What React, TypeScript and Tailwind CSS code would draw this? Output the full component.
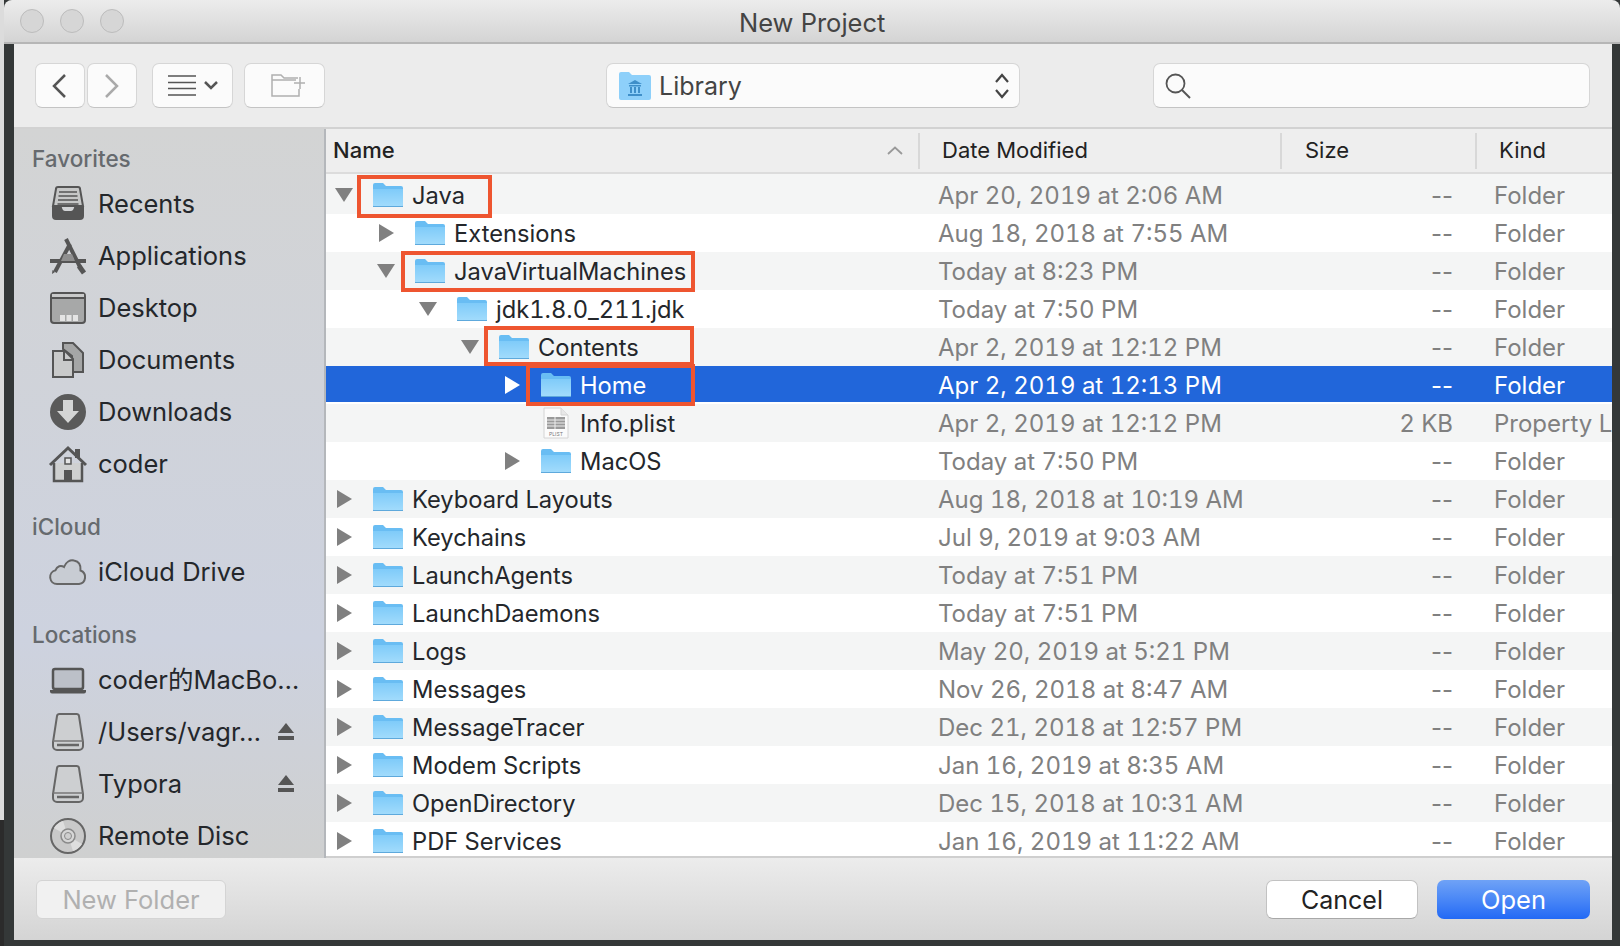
import type { ReactNode } from "react";

const font = "font-[Inter,'Noto_Sans_CJK_SC',sans-serif]";

type Row = {
  name: string;
  depth: number;
  open?: boolean;
  leaf?: boolean;
  date: string;
  size?: string;
  kind?: string;
  box?: [number, number, number, number];
};

const rows: Row[] = [
  { name: "Java", depth: 0, open: true, date: "Apr 20, 2019 at 2:06 AM", box: [31, -1, 135, 43] },
  { name: "Extensions", depth: 1, date: "Aug 18, 2018 at 7:55 AM" },
  { name: "JavaVirtualMachines", depth: 1, open: true, date: "Today at 8:23 PM", box: [75, -1, 294, 41] },
  { name: "jdk1.8.0_211.jdk", depth: 2, open: true, date: "Today at 7:50 PM" },
  { name: "Contents", depth: 3, open: true, date: "Apr 2, 2019 at 12:12 PM", box: [158, -2, 210, 40] },
  { name: "Home", depth: 4, date: "Apr 2, 2019 at 12:13 PM", box: [200, -2, 169, 42] },
  { name: "Info.plist", depth: 4, leaf: true, date: "Apr 2, 2019 at 12:12 PM", size: "2 KB", kind: "Property List" },
  { name: "MacOS", depth: 4, date: "Today at 7:50 PM" },
  { name: "Keyboard Layouts", depth: 0, date: "Aug 18, 2018 at 10:19 AM" },
  { name: "Keychains", depth: 0, date: "Jul 9, 2019 at 9:03 AM" },
  { name: "LaunchAgents", depth: 0, date: "Today at 7:51 PM" },
  { name: "LaunchDaemons", depth: 0, date: "Today at 7:51 PM" },
  { name: "Logs", depth: 0, date: "May 20, 2019 at 5:21 PM" },
  { name: "Messages", depth: 0, date: "Nov 26, 2018 at 8:47 AM" },
  { name: "MessageTracer", depth: 0, date: "Dec 21, 2018 at 12:57 PM" },
  { name: "Modem Scripts", depth: 0, date: "Jan 16, 2019 at 8:35 AM" },
  { name: "OpenDirectory", depth: 0, date: "Dec 15, 2018 at 10:31 AM" },
  { name: "PDF Services", depth: 0, date: "Jan 16, 2019 at 11:22 AM" },
];

function Folder() {
  return (
    <svg width="30" height="26" viewBox="0 0 30 26" className="shrink-0">
      <defs>
        <linearGradient id="fold" x1="0" y1="0" x2="0" y2="1">
          <stop offset="0" stopColor="#7fcbf9" />
          <stop offset="1" stopColor="#a3dcfc" />
        </linearGradient>
      </defs>
      <path d="M0 3a2 2 0 0 1 2-2h8l3 3h15a2 2 0 0 1 2 2v17a2 2 0 0 1-2 2H2a2 2 0 0 1-2-2z" fill="#69bdf3" />
      <path d="M0 7h30v16a2 2 0 0 1-2 2H2a2 2 0 0 1-2-2z" fill="url(#fold)" />
      <path d="M0 24.5h30" stroke="#5ea9dc" strokeWidth="1" />
    </svg>
  );
}

function PlistIcon() {
  return (
    <svg width="26" height="32" viewBox="0 0 26 32" className="shrink-0">
      <path d="M1 1h17l7 7v23H1z" fill="#fbfbfb" stroke="#d4d4d4" />
      <path d="M18 1v7h7" fill="#e8e8e8" stroke="#d4d4d4" />
      <rect x="4" y="10" width="18" height="12" fill="#9a9a9a" />
      <path d="M4 13h18M4 16h18M4 19h18M12 10v12" stroke="#eee" strokeWidth="1" />
      <text x="13" y="29" textAnchor="middle" fontSize="5" fill="#777" fontFamily="Inter, sans-serif">PLIST</text>
    </svg>
  );
}

function Toggle({ open, white }: { open?: boolean; white?: boolean }) {
  const fill = white ? "#ffffff" : "#808080";
  if (open) {
    return (
      <svg width="18" height="14" viewBox="0 0 18 14">
        <path d="M0 0h18L9 14z" fill={fill} />
      </svg>
    );
  }
  return (
    <svg width="15" height="18" viewBox="0 0 15 18">
      <path d="M0 0l15 9L0 18z" fill={fill} />
    </svg>
  );
}

const iconProps = { width: 40, height: 40, viewBox: "0 0 40 40", className: "shrink-0" };

const RecentsIcon = (
  <svg {...iconProps}>
    <path d="M8 5a2 2 0 0 1 2-2h20a2 2 0 0 1 2 2l3 17H5z" fill="#c6c7c7" stroke="#555" strokeWidth="2" />
    <path d="M11 8h18M10.500 12h19M10 16h20M9.500 20h21" stroke="#555" strokeWidth="1.500" />
    <path d="M4 22h9c1 0 1 5 4 5h6c3 0 3-5 4-5h9v10a4 4 0 0 1-4 4H8a4 4 0 0 1-4-4z" fill="#555" />
  </svg>
);
const AppsIcon = (
  <svg {...iconProps}>
    <path d="M18 3l15 30" stroke="#555" strokeWidth="4" />
    <path d="M22 8L7 36" stroke="#555" strokeWidth="4" />
    <path d="M7 36l-3 2 .5-4z" fill="#555" />
    <path d="M2 25h36" stroke="#555" strokeWidth="4" />
    <path d="M13 25h14l-3-7h-8z" fill="#8f8f8f" />
    <path d="M31 30l5 7" stroke="#555" strokeWidth="5" />
  </svg>
);
const DesktopIcon = (
  <svg {...iconProps}>
    <rect x="3" y="5" width="34" height="30" rx="3" fill="#a7a8a8" stroke="#555" strokeWidth="2" />
    <path d="M3 10h34" stroke="#555" strokeWidth="2" />
    <rect x="4" y="6" width="32" height="3" fill="#c9caca" />
    <path d="M12 27h5v6h-5zM18.500 27h5v6h-5zM25 27h5v6h-5z" fill="#e4e4e4" />
  </svg>
);
const DocumentsIcon = (
  <svg {...iconProps}>
    <path d="M15 3h10l10 10v19H24V16L15 9z" fill="#a5a6a6" stroke="#555" strokeWidth="2" />
    <path d="M5 11h12l8 8v18H5z" fill="#c9caca" stroke="#555" strokeWidth="2" />
    <path d="M16 11v9h9" fill="none" stroke="#555" strokeWidth="2" />
  </svg>
);
const DownloadsIcon = (
  <svg {...iconProps}>
    <circle cx="20" cy="20" r="18" fill="#5a5a5a" />
    <path d="M15 8h10v11h6L20 31 9 19h6z" fill="#d4d5d5" />
  </svg>
);
const HomeIcon = (
  <svg {...iconProps}>
    <path d="M6 19v18h28V19" fill="#cfd0d0" stroke="#555" strokeWidth="2.500" />
    <path d="M2 21L20 4l18 17" fill="none" stroke="#555" strokeWidth="3" />
    <rect x="27" y="5" width="5" height="9" fill="#555" />
    <rect x="17" y="14" width="6" height="6" fill="#e4e4e4" stroke="#555" strokeWidth="1.500" />
    <rect x="16" y="26" width="8" height="11" fill="#555" />
  </svg>
);
const CloudIcon = (
  <svg {...iconProps}>
    <path d="M9 32a7 7 0 0 1-1.500-13.800C9 14 13 13 16 15c2-5 6-7.500 10-6.500 5 1 7 5 6.500 10A7 7 0 0 1 31 32z" fill="#c8ccd3" stroke="#666" strokeWidth="2" />
  </svg>
);
const LaptopIcon = (
  <svg {...iconProps}>
    <rect x="5" y="9" width="30" height="20" rx="2" fill="#bcc0c8" stroke="#555" strokeWidth="2.500" />
    <path d="M2 30h36v1.500a2 2 0 0 1-2 2H4a2 2 0 0 1-2-2z" fill="#555" />
  </svg>
);
const DriveIcon = (
  <svg {...iconProps}>
    <path d="M9 4a2.500 2.500 0 0 1 2.500-2h17A2.500 2.500 0 0 1 31 4l4 26v4a4 4 0 0 1-4 4H9a4 4 0 0 1-4-4v-4z" fill="#cdcfd1" stroke="#666" strokeWidth="2" />
    <path d="M5 29h30" stroke="#777" strokeWidth="1.500" />
    <path d="M9 33h22" stroke="#666" strokeWidth="2.500" />
  </svg>
);
const DiscIcon = (
  <svg {...iconProps}>
    <circle cx="20" cy="20" r="17" fill="#c9c9c9" stroke="#666" strokeWidth="2" />
    <path d="M20 20L6 12a16 16 0 0 1 9-7zM20 20l14 8a16 16 0 0 1-9 7z" fill="#dedede" />
    <circle cx="20" cy="20" r="7" fill="#d6d6d6" stroke="#8a8a8a" strokeWidth="1.500" />
    <circle cx="20" cy="20" r="3.500" fill="#cfcfcf" stroke="#8a8a8a" />
  </svg>
);
const Eject = (
  <svg width="16" height="18" viewBox="0 0 16 18">
    <path d="M8 0l8 10H0z" fill="#555" />
    <rect y="13" width="16" height="4" fill="#555" />
  </svg>
);

const sections: { title: string; items: { icon: ReactNode; label: string; eject?: boolean }[] }[] = [
  {
    title: "Favorites",
    items: [
      { icon: RecentsIcon, label: "Recents" },
      { icon: AppsIcon, label: "Applications" },
      { icon: DesktopIcon, label: "Desktop" },
      { icon: DocumentsIcon, label: "Documents" },
      { icon: DownloadsIcon, label: "Downloads" },
      { icon: HomeIcon, label: "coder" },
    ],
  },
  { title: "iCloud", items: [{ icon: CloudIcon, label: "iCloud Drive" }] },
  {
    title: "Locations",
    items: [
      { icon: LaptopIcon, label: "coder的MacBo…" },
      { icon: DriveIcon, label: "/Users/vagr…", eject: true },
      { icon: DriveIcon, label: "Typora", eject: true },
      { icon: DiscIcon, label: "Remote Disc" },
    ],
  },
];

const toolBtn = "h-[45px] flex items-center justify-center rounded-[7px] bg-[#fbfbfb] border border-[#d6d6d6] border-b-[#c4c4c4]";

export default function App() {
  return (
    <div className={`${font} w-[1620px] h-[946px] overflow-hidden flex bg-[#343838] text-[24px] leading-[1.2]`}>
      {/* strip of the desktop behind the window */}
      <div className="w-[4px] flex flex-col">
        <div className="h-[820px] bg-[#dcdcdc]" />
        <div className="flex-1 bg-[#2b2b2b]" />
      </div>

      <div className="w-[1616px] flex flex-col">
        {/* title bar */}
        <div className="h-[44px] shrink-0 flex items-center relative rounded-t-[8px] border-b-2 border-[#b6b6b6] bg-linear-to-b from-[#ececec] to-[#d4d4d4]">
          <div className="flex gap-[16px] pl-[16px]">
            <span className="w-[24px] h-[24px] rounded-full bg-[#d6d6d6] border border-[#bcbcbc]" />
            <span className="w-[24px] h-[24px] rounded-full bg-[#d6d6d6] border border-[#bcbcbc]" />
            <span className="w-[24px] h-[24px] rounded-full bg-[#d6d6d6] border border-[#bcbcbc]" />
          </div>
          <span className="absolute left-[735px] top-[8px] text-[#444] text-[25.500px]">New Project</span>
        </div>

        <div className="flex-1 flex min-h-0">
          <div className="w-[10px] shrink-0" />
          <div className="w-[1598px] shrink-0 flex flex-col">
            {/* toolbar */}
            <div className="h-[85px] shrink-0 flex pl-[21px] pt-[19px] bg-[#ececec] border-b-2 border-[#d2d2d2]">
              <div className={`${toolBtn} w-[50px]`}>
                <svg width="16" height="26" viewBox="0 0 16 26" className="-ml-[2px]"><path d="M14 2L3 13l11 11" fill="none" stroke="#555" strokeWidth="2.500" /></svg>
              </div>
              <div className={`${toolBtn} w-[50px] ml-[2px]`}>
                <svg width="16" height="26" viewBox="0 0 16 26"><path d="M2 2l11 11L2 24" fill="none" stroke="#aaa" strokeWidth="2.500" /></svg>
              </div>
              <div className={`${toolBtn} w-[81px] ml-[15px] gap-[8px]`}>
                <svg width="28" height="21" viewBox="0 0 28 21"><path d="M0 1h28M0 7.500h28M0 13.500h28M0 20h28" stroke="#555" strokeWidth="1.500" /></svg>
                <svg width="14" height="9" viewBox="0 0 14 9"><path d="M1 1l6 6 6-6" fill="none" stroke="#555" strokeWidth="2.500" /></svg>
              </div>
              <div className={`${toolBtn} w-[81px] ml-[11px]`}>
                <svg width="34" height="23" viewBox="0 0 34 23" className="ml-[6px]">
                  <path d="M28 15v7H1V1h9l3 3h14M1 6h24M29 3v12M23 9h11" fill="none" stroke="#b0b0b0" strokeWidth="1.500" />
                </svg>
              </div>
              <div className={`${toolBtn} w-[414px] ml-[281px] !justify-start pl-[12px] pr-[9px]`}>
                <svg width="32" height="30" viewBox="0 0 32 30" className="shrink-0">
                  <path d="M0 3a2 2 0 0 1 2-2h8l3 3h17a2 2 0 0 1 2 2v21a2 2 0 0 1-2 2H2a2 2 0 0 1-2-2z" fill="#8ed0fa" />
                  <path d="M16 9l-7 4h14zM10 14h12v1.500H10zM11 16h2v6h-2zM15 16h2v6h-2zM19 16h2v6h-2zM9 23h14v2H9z" fill="#3f8fc9" />
                </svg>
                <span className="ml-[8px] pt-[1px] text-[#444] text-[25px]">Library</span>
                <svg width="16" height="28" viewBox="0 0 16 28" className="ml-auto"><path d="M2 10l6-7 6 7M2 18l6 7 6-7" fill="none" stroke="#444" strokeWidth="2.200" /></svg>
              </div>
              <div className={`${toolBtn} w-[437px] ml-[133px] !justify-start pl-[10px]`}>
                <svg width="28" height="28" viewBox="0 0 28 28"><circle cx="11.500" cy="11.500" r="9" fill="none" stroke="#555" strokeWidth="1.800" /><path d="M18 18l8 8" stroke="#555" strokeWidth="2" /></svg>
              </div>
            </div>

            <div className="flex-1 flex min-h-0">
              {/* sidebar */}
              <div className="w-[312px] shrink-0 overflow-hidden pt-[15px] border-r-2 border-[#b4b7bb] bg-linear-to-b from-[#d3d4d4] via-[#cdd2df] via-70% to-[#cfd0d0]">
                {sections.map((s, i) => (
                  <div key={s.title} className={i === 0 ? "" : "mt-[22px]"}>
                    <div className="h-[30px] mb-[4px] pl-[18px] pb-[2px] flex items-center text-[22.500px] font-medium text-[#666a6e]">{s.title}</div>
                    {s.items.map((it) => (
                      <div key={it.label} className="h-[52px] flex items-center pl-[34px] pr-[20px]">
                        {it.icon}
                        <span className="ml-[10px] text-[25.500px] text-[#24272b] whitespace-nowrap">{it.label}</span>
                        {it.eject && <span className="ml-auto mr-[10px] flex">{Eject}</span>}
                      </div>
                    ))}
                  </div>
                ))}
              </div>

              {/* file list */}
              <div className="flex-1 min-w-0 flex flex-col overflow-hidden bg-white">
                <div className="h-[45px] shrink-0 flex items-center bg-[#eeeeee] border-b-2 border-[#dcdcdc] text-[#222] text-[22px]">
                  <div className="w-[594px] h-[36px] flex items-center justify-between pl-[7px] pr-[15px] border-r-2 border-[#d8d8d8]">
                    <span className="font-medium">Name</span>
                    <svg width="16" height="9" viewBox="0 0 16 9"><path d="M1 8l7-6.500L15 8" fill="none" stroke="#999" strokeWidth="1.800" /></svg>
                  </div>
                  <div className="w-[362px] h-[36px] flex items-center pl-[22px] border-r-2 border-[#d8d8d8]">Date Modified</div>
                  <div className="w-[195px] h-[36px] flex items-center pl-[23px] border-r-2 border-[#d8d8d8]">Size</div>
                  <div className="flex-1 pl-[22px]">Kind</div>
                </div>
                <div className="flex-1 min-h-0 overflow-hidden pt-[2px] bg-[#f4f5f5] border-b-2 border-[#cfcfcf]">
                  {rows.map((r, i) => {
                    const selected = r.name === "Home";
                    const bg = selected
                      ? "bg-[#2166da] shadow-[inset_0_-2px_0_#ffffff]"
                      : i % 2 === 0
                        ? "bg-[#f4f5f5]"
                        : "bg-white";
                    const muted = selected ? "text-white" : "text-[#808080]";
                    return (
                      <div key={r.name} className={`relative h-[38px] flex items-center text-[24px] tabular-nums ${bg}`}>
                        <div className="w-[592px] shrink-0 flex items-center" style={{ paddingLeft: 3 + r.depth * 42 }}>
                          <div className="w-[30px] flex justify-center">
                            {!r.leaf && <Toggle open={r.open} white={selected} />}
                          </div>
                          <div className="ml-[14px] w-[30px] flex justify-center">
                            {r.leaf ? <PlistIcon /> : <Folder />}
                          </div>
                          <span className={`ml-[9px] pt-[2px] text-[23.700px] whitespace-nowrap ${selected ? "text-white" : "text-[#24272b]"}`}>{r.name}</span>
                        </div>
                        <div className={`w-[362px] shrink-0 pl-[20px] pt-[2px] whitespace-nowrap ${muted}`}>{r.date}</div>
                        <div className={`w-[195px] shrink-0 pr-[22px] pt-[2px] text-right normal-nums ${muted}`}>{r.size ?? "--"}</div>
                        <div className={`flex-1 min-w-0 pl-[19px] pt-[2px] whitespace-nowrap ${muted}`}>{r.kind ?? "Folder"}</div>
                        {r.box && (
                          <div
                            className="absolute z-10 border-[4px] border-[#ee5530]"
                            style={{ left: r.box[0], top: r.box[1], width: r.box[2], height: r.box[3] }}
                          />
                        )}
                      </div>
                    );
                  })}
                </div>
              </div>
            </div>

            {/* footer */}
            <div className="h-[82px] shrink-0 flex items-center pl-[22px] pr-[22px] bg-linear-to-b from-[#ececec] to-[#d4d4d4]">
              <div className="w-[190px] h-[39px] pt-[2px] flex items-center justify-center rounded-[6px] bg-[#f1f1f1] border border-[#d4d4d4] text-[#b0b0b0] text-[25.500px]">New Folder</div>
              <div className="ml-auto w-[152px] h-[39px] pt-[2px] flex items-center justify-center rounded-[7px] bg-white border border-[#c2c2c2] border-b-[#a8a8a8] text-[#222] text-[25px]">Cancel</div>
              <div className="ml-[19px] w-[153px] h-[39px] pt-[2px] flex items-center justify-center rounded-[7px] bg-linear-to-b from-[#6fa2f6] to-[#2269f5] text-white text-[25.500px]">Open</div>
            </div>
          </div>
          <div className="flex-1" />
        </div>
        <div className="h-[6px] shrink-0" />
      </div>
    </div>
  );
}
